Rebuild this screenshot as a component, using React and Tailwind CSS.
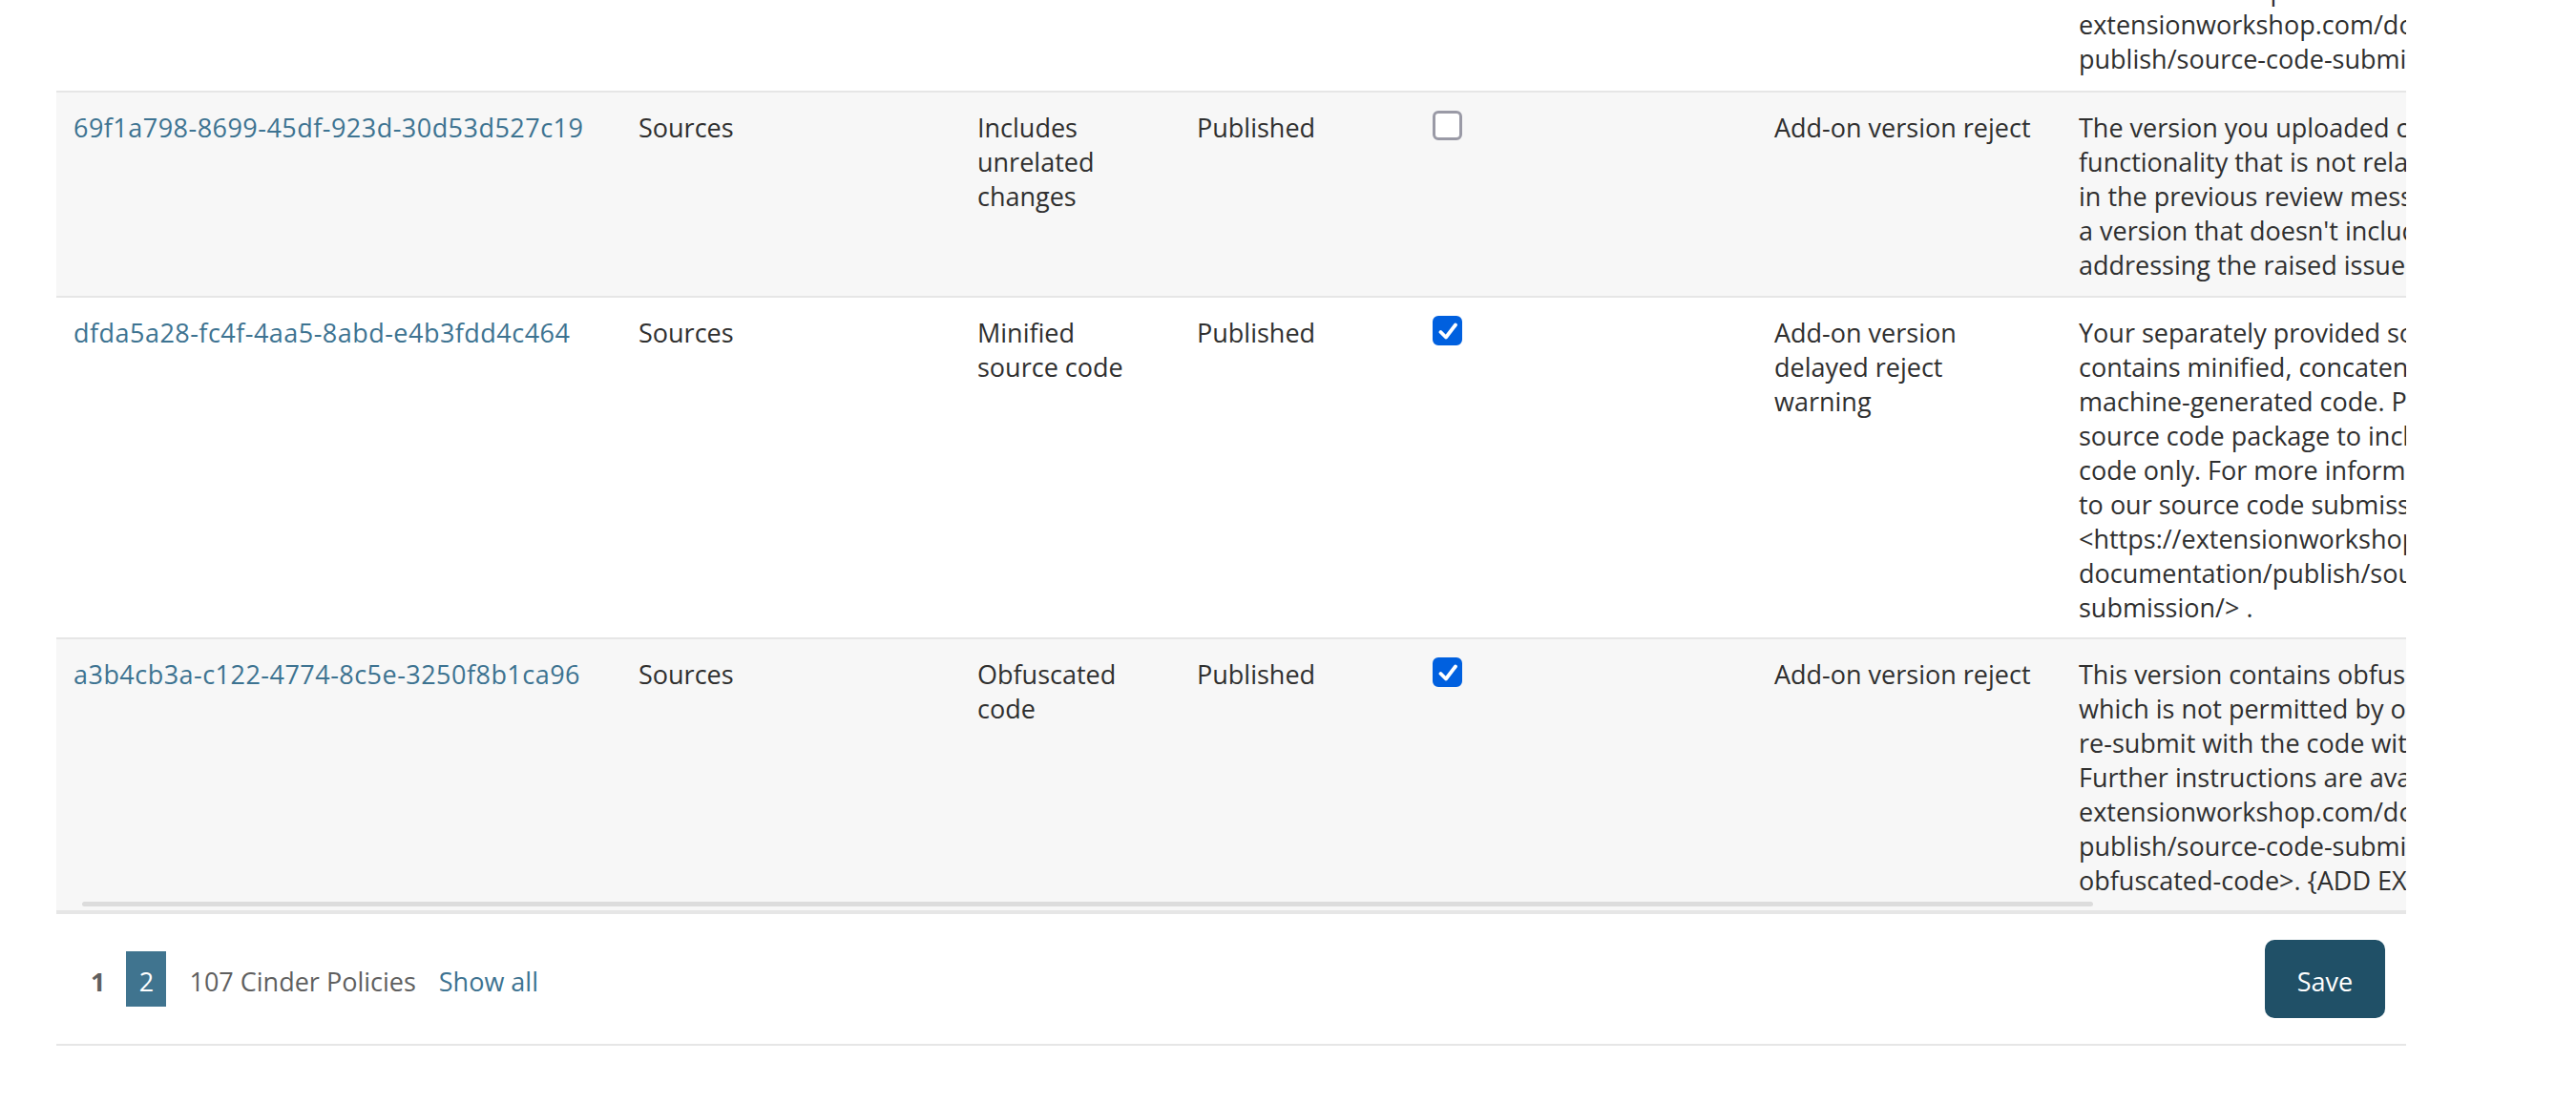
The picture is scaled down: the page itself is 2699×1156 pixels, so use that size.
import React from "react";

const font = "[font-family:'Open_Sans','Noto_Sans',sans-serif]";

const rows = [
  {
    id: "69f1a798-8699-45df-923d-30d53d527c19",
    reason: ["Includes", "unrelated", "changes"],
    checked: false,
    action: ["Add-on version reject"],
    text: [
      "The version you uploaded contains",
      "functionality that is not related to what was noted",
      "in the previous review message. Please upload",
      "a version that doesn't include it while",
      "addressing the raised issue.",
    ],
    shade: true,
    height: "min-h-[215px]",
  },
  {
    id: "dfda5a28-fc4f-4aa5-8abd-e4b3fdd4c464",
    reason: ["Minified", "source code"],
    checked: true,
    action: ["Add-on version", "delayed reject", "warning"],
    text: [
      "Your separately provided source code",
      "contains minified, concatenated or otherwise",
      "machine-generated code. Please update your",
      "source code package to include the original",
      "code only. For more information, please refer",
      "to our source code submission policy",
      "<https://extensionworkshop.com/",
      "documentation/publish/source-code-",
      "submission/> .",
    ],
    shade: false,
    height: "",
  },
  {
    id: "a3b4cb3a-c122-4774-8c5e-3250f8b1ca96",
    reason: ["Obfuscated", "code"],
    checked: true,
    action: ["Add-on version reject"],
    text: [
      "This version contains obfuscated code,",
      "which is not permitted by our policies. Please",
      "re-submit with the code without obfuscation.",
      "Further instructions are available at <https://",
      "extensionworkshop.com/documentation/",
      "publish/source-code-submission/#",
      "obfuscated-code>. {ADD EXAMPLE}",
    ],
    shade: true,
    height: "",
  },
];

const gridCols = "grid grid-cols-[592px_355px_230px_247px_358px_319px_1fr]";

function Lines({ items }) {
  return items.map((line) => (
    <div key={line} className="whitespace-nowrap">
      {line}
    </div>
  ));
}

function Checkbox({ checked }) {
  return (
    <span className="relative block h-[31px] w-[31px]">
      <input
        type="checkbox"
        defaultChecked={checked}
        className="block h-[31px] w-[31px] appearance-none rounded-[6px] border-[3px] border-[#9a9aa6] bg-white checked:border-[#0060df] checked:bg-[#0060df]"
      />
      {checked && (
        <svg
          viewBox="0 0 31 31"
          className="pointer-events-none absolute inset-0 h-[31px] w-[31px]"
          fill="none"
          stroke="#fff"
          strokeWidth="3.8"
          strokeLinecap="round"
          strokeLinejoin="round"
        >
          <path d="M8.5 17 L14 22.5 L24 9.5" />
        </svg>
      )}
    </span>
  );
}

function PolicyRow({ row }) {
  return (
    <div className={`${gridCols} ${row.height} border-b-2 border-[#e6e6e6] last:border-b-0 ${row.shade ? "bg-[#f7f7f7]" : "bg-white"}`}>
      <div className="px-[18px] pt-[19px] pb-[13px] tracking-[0.47px] text-[#3d7391] whitespace-nowrap">{row.id}</div>
      <div className="px-[18px] pt-[19px] pb-[13px]">Sources</div>
      <div className="px-[18px] pt-[19px] pb-[13px]">
        <Lines items={row.reason} />
      </div>
      <div className="px-[18px] pt-[19px] pb-[13px]">Published</div>
      <div className="px-[18px] pt-[19px]">
        <Checkbox checked={row.checked} />
      </div>
      <div className="px-[18px] pt-[19px] pb-[13px]">
        <Lines items={row.action} />
      </div>
      <div className="px-[18px] pt-[19px] pb-[13px]">
        <Lines items={row.text} />
      </div>
    </div>
  );
}

export default function App() {
  return (
    <div className={`min-h-[1156px] w-full overflow-hidden bg-white text-[27px] leading-[36px] text-[#2f2f2f] ${font}`}>
      <div className="ml-[59px] w-[2462px]">
        <div className="relative h-[958px] overflow-hidden border-b-4 border-[#e6e6e6]">
          {/* first row is scrolled off the top */}
          <div className={`${gridCols} h-[97px] content-end overflow-hidden border-b-2 border-[#e6e6e6]`}>
            <div className="col-start-7 pb-[15px] pl-[18px]">
              <Lines
                items={[
                  "available at <https://",
                  "extensionworkshop.com/documentation/",
                  "publish/source-code-submission/",
                ]}
              />
            </div>
          </div>
          {rows.map((row) => (
            <PolicyRow key={row.id} row={row} />
          ))}
          {/* scrollbar thumb */}
          <div className="absolute bottom-[4px] left-[27px] h-[5px] w-[2107px] rounded-full bg-[#dcdcdc]" />
        </div>

        <div className="flex h-[138px] items-center justify-between border-b-2 border-[#e6e6e6] pr-[22px]">
          <div className="flex items-center text-[#5f5f5f]">
            <span className="ml-[36px] pt-[6px] font-bold">1</span>
            <span className="ml-[22px] flex h-[58px] w-[42px] items-center justify-center bg-[#40748f] pt-[6px] text-white">2</span>
            <span className="ml-[24px] pt-[6px]">107 Cinder Policies</span>
            <a className="ml-[24px] pt-[6px] text-[#3d7391]">Show all</a>
          </div>
          <button className="h-[82px] w-[126px] rounded-[10px] bg-[#205067] pt-[6px] text-white">Save</button>
        </div>
      </div>
    </div>
  );
}
